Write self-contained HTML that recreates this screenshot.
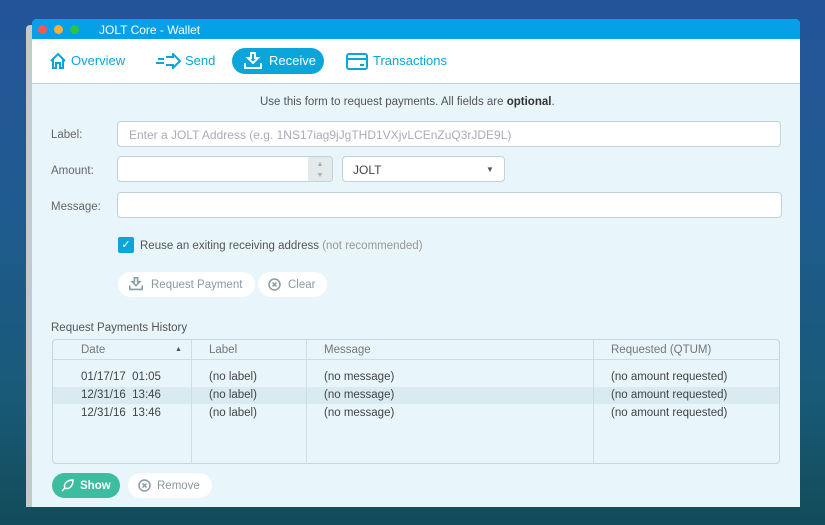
<!DOCTYPE html>
<html><head><style>
*{margin:0;padding:0;box-sizing:border-box}
body{width:825px;height:525px;overflow:hidden;position:relative;font-family:"Liberation Sans",sans-serif;background:linear-gradient(180deg,#23549a 0%,#1f5b8f 40%,#195a78 75%,#124c5a 100%)}
.a{position:absolute}
.sh{left:26px;top:25px;width:8px;height:482px;background:#c8c8c8;border-radius:4px 0 0 0}
.win{left:32px;top:19px;width:768px;height:488px;background:#e8f5fa;border-radius:5px 5px 0 0;overflow:hidden}
.title{left:0;top:0;width:768px;height:20px;background:#05a0e8;color:#fff;font-size:12px}
.dot{width:9px;height:9px;border-radius:50%;top:6px}
.nav{left:0;top:20px;width:768px;height:45px;background:#fff;border-bottom:1px solid #bcd3dc}
.nv{color:#0aa6da;font-size:13px;top:14px}
.t{font-size:11.5px;color:#555}
.lbl{font-size:11.5px;color:#666;left:19px}
.inp{background:#fff;border:1px solid #bfd3d8;border-radius:4px;height:26px}
.btn{background:#fff;border-radius:13px;height:25px;font-size:11.5px;color:#8a9aa0}
.col{top:0;width:1px;height:124px;background:#ccdde3}
</style></head><body>
<div class="a sh"></div>
<div class="a win">
 <div class="a title">
  <div class="a dot" style="left:6px;background:#f05a52"></div>
  <div class="a dot" style="left:22px;background:#f6b13d"></div>
  <div class="a dot" style="left:38px;background:#2fc244"></div>
  <div class="a" style="left:67px;top:4px">JOLT Core - Wallet</div>
 </div>
 <div class="a nav">
  <svg class="a" style="left:17px;top:13px" width="18" height="18" viewBox="0 0 18 18" fill="none" stroke="#0aa6da" stroke-width="2"><path d="M2 9L9 2L16 9M4 7V16H7V11H11V16H14V7"/></svg>
  <div class="a nv" style="left:39px">Overview</div>
  <svg class="a" style="left:124px;top:14px" width="26" height="16" viewBox="0 0 26 16" fill="none" stroke="#0aa6da" stroke-width="2"><path d="M10 4H17V1L24 8L17 15V12H10M2 6H8M0 10H8"/></svg>
  <div class="a nv" style="left:153px">Send</div>
  <div class="a" style="left:200px;top:9px;width:92px;height:26px;border-radius:13px;background:#0aa6da"></div>
  <svg class="a" style="left:211px;top:13px" width="20" height="18" viewBox="0 0 20 18" fill="none" stroke="#fff" stroke-width="2"><path d="M8 1H12V6H15L10 11L5 6H8ZM2 11V16H18V11"/></svg>
  <div class="a nv" style="left:237px;color:#fff">Receive</div>
  <svg class="a" style="left:314px;top:14px" width="22" height="17" viewBox="0 0 22 17" fill="none" stroke="#0aa6da" stroke-width="2"><rect x="1" y="1" width="20" height="15" rx="2"/><path d="M1 6H21M14 12H18"/></svg>
  <div class="a nv" style="left:341px">Transactions</div>
 </div>
 <div class="a t" style="left:228px;top:77px">Use this form to request payments. All fields are <b style="color:#333">optional</b>.</div>
 <div class="a lbl" style="top:110px">Label:</div>
 <div class="a inp" style="left:85px;top:102px;width:664px"></div>
 <div class="a" style="left:97px;top:109px;font-size:12px;color:#aab">Enter a JOLT Address (e.g. 1NS17iag9jJgTHD1VXjvLCEnZuQ3rJDE9L)</div>
 <div class="a lbl" style="top:146px">Amount:</div>
 <div class="a inp" style="left:85px;top:137px;width:216px;overflow:hidden"><div class="a" style="right:0;top:0;width:24px;height:26px;background:#e2eaec;font-size:7px;color:#aaa;text-align:center;line-height:11px;padding-top:2px">▲<br>▼</div></div>
 <div class="a inp" style="left:310px;top:137px;width:163px"></div>
 <div class="a" style="left:321px;top:144px;font-size:12px;color:#444">JOLT</div>
 <div class="a" style="left:454px;top:146px;font-size:8px;color:#555">▼</div>
 <div class="a lbl" style="top:182px">Message:</div>
 <div class="a inp" style="left:85px;top:173px;width:665px"></div>
 <div class="a" style="left:86px;top:218px;width:16px;height:16px;background:#0aa6da;border-radius:2px;color:#fff;font-size:11px;text-align:center;line-height:16px">✓</div>
 <div class="a t" style="left:108px;top:221px">Reuse an exiting receiving address <span style="color:#999">(not recommended)</span></div>
 <div class="a btn" style="left:86px;top:253px;width:137px"><svg class="a" style="left:10px;top:5px" width="16" height="14" viewBox="0 0 20 18" fill="none" stroke="#8a9aa0" stroke-width="2"><path d="M8 1H12V6H15L10 11L5 6H8ZM2 11V16H18V11"/></svg><span class="a" style="left:33px;top:7px">Request Payment</span></div>
 <div class="a btn" style="left:226px;top:253px;width:69px"><svg class="a" style="left:10px;top:6px" width="13" height="13" viewBox="0 0 13 13" fill="none" stroke="#8a9aa0" stroke-width="1.5"><circle cx="6.5" cy="6.5" r="5.5"/><path d="M4.5 4.5L8.5 8.5M8.5 4.5L4.5 8.5"/></svg><span class="a" style="left:30px;top:7px">Clear</span></div>
 <div class="a t" style="left:19px;top:303px">Request Payments History</div>
 <div class="a" style="left:20px;top:320px;width:728px;height:125px;border:1px solid #c6d6dc;border-radius:4px;font-size:11.5px;color:#444">
  <div class="a" style="left:0;top:19px;width:726px;height:1px;background:#ccdde3"></div>
  <div class="a" style="left:0;top:47px;width:726px;height:17px;background:#d9ebf1"></div>
  <div class="a col" style="left:138px"></div><div class="a col" style="left:253px"></div><div class="a col" style="left:540px"></div>
  <div class="a" style="left:28px;top:4px;color:#777">Date</div><div class="a" style="left:122px;top:6px;font-size:7px;color:#555">▲</div>
  <div class="a" style="left:156px;top:4px;color:#777">Label</div>
  <div class="a" style="left:271px;top:4px;color:#777">Message</div>
  <div class="a" style="left:558px;top:4px;color:#777">Requested (QTUM)</div>
  <div class="a" style="left:28px;top:31px">01/17/17&nbsp; 01:05</div><div class="a" style="left:156px;top:31px">(no label)</div><div class="a" style="left:271px;top:31px">(no message)</div><div class="a" style="left:558px;top:31px">(no amount requested)</div>
  <div class="a" style="left:28px;top:49px">12/31/16&nbsp; 13:46</div><div class="a" style="left:156px;top:49px">(no label)</div><div class="a" style="left:271px;top:49px">(no message)</div><div class="a" style="left:558px;top:49px">(no amount requested)</div>
  <div class="a" style="left:28px;top:67px">12/31/16&nbsp; 13:46</div><div class="a" style="left:156px;top:67px">(no label)</div><div class="a" style="left:271px;top:67px">(no message)</div><div class="a" style="left:558px;top:67px">(no amount requested)</div>
 </div>
 <div class="a btn" style="left:20px;top:454px;width:68px;background:#3dbda0;color:#fff"><svg class="a" style="left:9px;top:6px" width="13" height="13" viewBox="0 0 13 13" fill="none" stroke="#fff" stroke-width="1.5"><path d="M1 12L4 9C2 5 6 1 12 1C12 7 8 11 4 9"/></svg><span class="a" style="left:28px;top:7px;font-weight:bold">Show</span></div>
 <div class="a btn" style="left:96px;top:454px;width:84px"><svg class="a" style="left:10px;top:6px" width="13" height="13" viewBox="0 0 13 13" fill="none" stroke="#8a9aa0" stroke-width="1.5"><circle cx="6.5" cy="6.5" r="5.5"/><path d="M4.5 4.5L8.5 8.5M8.5 4.5L4.5 8.5"/></svg><span class="a" style="left:29px;top:7px">Remove</span></div>
</div>
</body></html>
